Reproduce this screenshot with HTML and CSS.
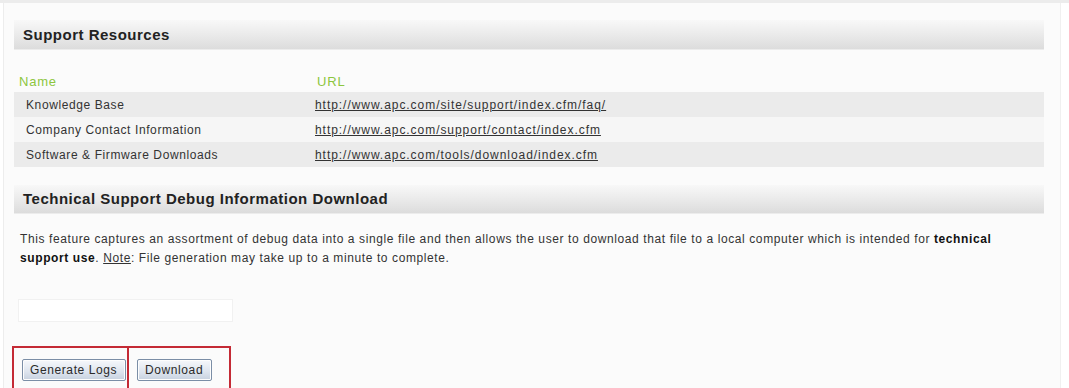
FILE: index.html
```html
<!DOCTYPE html>
<html>
<head>
<meta charset="utf-8">
<link rel="stylesheet" href="styles.css">
</head>
<body>
<div class="page">
<div class="frame">
  <div class="content">
    <h2 class="bar">Support Resources</h2>
    <table class="res">
      <thead>
        <tr><th class="c-name">Name</th><th>URL</th></tr>
      </thead>
      <tbody>
        <tr class="odd"><td class="c-name">Knowledge Base</td><td><a href="#">http://www.apc.com/site/support/index.cfm/faq/</a></td></tr>
        <tr><td class="c-name">Company Contact Information</td><td><a href="#">http://www.apc.com/support/contact/index.cfm</a></td></tr>
        <tr class="odd"><td class="c-name">Software &amp; Firmware Downloads</td><td><a href="#">http://www.apc.com/tools/download/index.cfm</a></td></tr>
      </tbody>
    </table>
    <h2 class="bar bar2">Technical Support Debug Information Download</h2>
    <p class="desc">This feature captures an assortment of debug data into a single file and then allows the user to download that file to a local computer which is intended for <b>technical support use</b>. <u>Note</u>: File generation may take up to a minute to complete.</p>
    <div class="field"></div>
    <div class="actions">
      <div class="hl hl1"><button class="btn">Generate Logs</button></div>
      <div class="hl hl2"><button class="btn">Download</button></div>
    </div>
  </div>
</div>
</div>
</body>
</html>
```
FILE: styles.css
```css
html, body {
  margin: 0;
  padding: 0;
  background: #ffffff;
  font-family: "Liberation Sans", Arial, sans-serif;
  color: #333;
}
.page {
  border-top: 3px solid #ececec;
}
.frame {
  margin-left: 3px;
  margin-right: 8px;
  border-left: 1px solid #ededed;
  border-right: 1px solid #f0f0f0;
  background: #fbfbfb;
  height: 385px;
  overflow: hidden;
}
.content {
  padding: 17px 16px 0 10px;
}
.bar {
  margin: 0;
  height: 29px;
  line-height: 29px;
  padding-left: 9px;
  font-size: 15px;
  letter-spacing: 0.5px;
  font-weight: bold;
  color: #222;
  background: linear-gradient(#f8f8f8, #e9e9e9 55%, #dcdcdc);
  box-shadow: 0 1px 0 #ececec;
}
.bar2 {
  margin-top: 18px;
  height: 28px;
  line-height: 28px;
}
.res {
  width: 100%;
  border-collapse: collapse;
  margin-top: 21px;
  font-size: 12px;
  letter-spacing: 0.6px;
}
.res th {
  text-align: left;
  font-weight: normal;
  font-size: 13px;
  letter-spacing: 0.8px;
  color: #8dc63f;
  height: 22px;
  padding: 0 0 0 2px;
  vertical-align: middle;
}
.res th.c-name { padding-left: 5px; }
.res td {
  height: 25px;
  padding: 0;
  color: #333;
}
.res td.c-name {
  padding-left: 12px;
  width: 289px;
}
.res tbody tr td { background-color: #f6f6f6; }
.res tbody tr.odd td { background-color: #ebebeb; }
.res a {
  color: #333;
  font-size: 12px;
  letter-spacing: 0.95px;
  text-decoration: underline;
}
.desc {
  margin: 17px 0 0 6px;
  font-size: 12px;
  letter-spacing: 0.6px;
  line-height: 19px;
  color: #333;
}
.desc b { color: #111; }
.field {
  margin: 31px 0 0 4px;
  width: 215px;
  height: 23px;
  background: #fff;
  border: 1px solid #f1f1f1;
  box-sizing: border-box;
}
.actions {
  display: flex;
  margin: 24px 0 0 -2px;
}
.hl {
  border: 2px solid #c42a35;
  border-bottom: none;
  height: 44px;
  box-sizing: border-box;
  padding: 11px 0 0 8px;
}
.hl1 { width: 117px; }
.hl2 { width: 102px; border-left: none; padding-left: 8px; }
.btn {
  font-family: "Liberation Sans", Arial, sans-serif;
  font-size: 12px;
  letter-spacing: 0.6px;
  color: #2a2a2a;
  height: 22px;
  padding: 0 8px 0 7px;
  border: 1px solid #7b8ea6;
  border-radius: 2px;
  background: linear-gradient(#f6f8fb, #dde4ee 60%, #c7d1df);
  box-shadow: inset 0 0 0 1px #fdfdfd;
}
```
